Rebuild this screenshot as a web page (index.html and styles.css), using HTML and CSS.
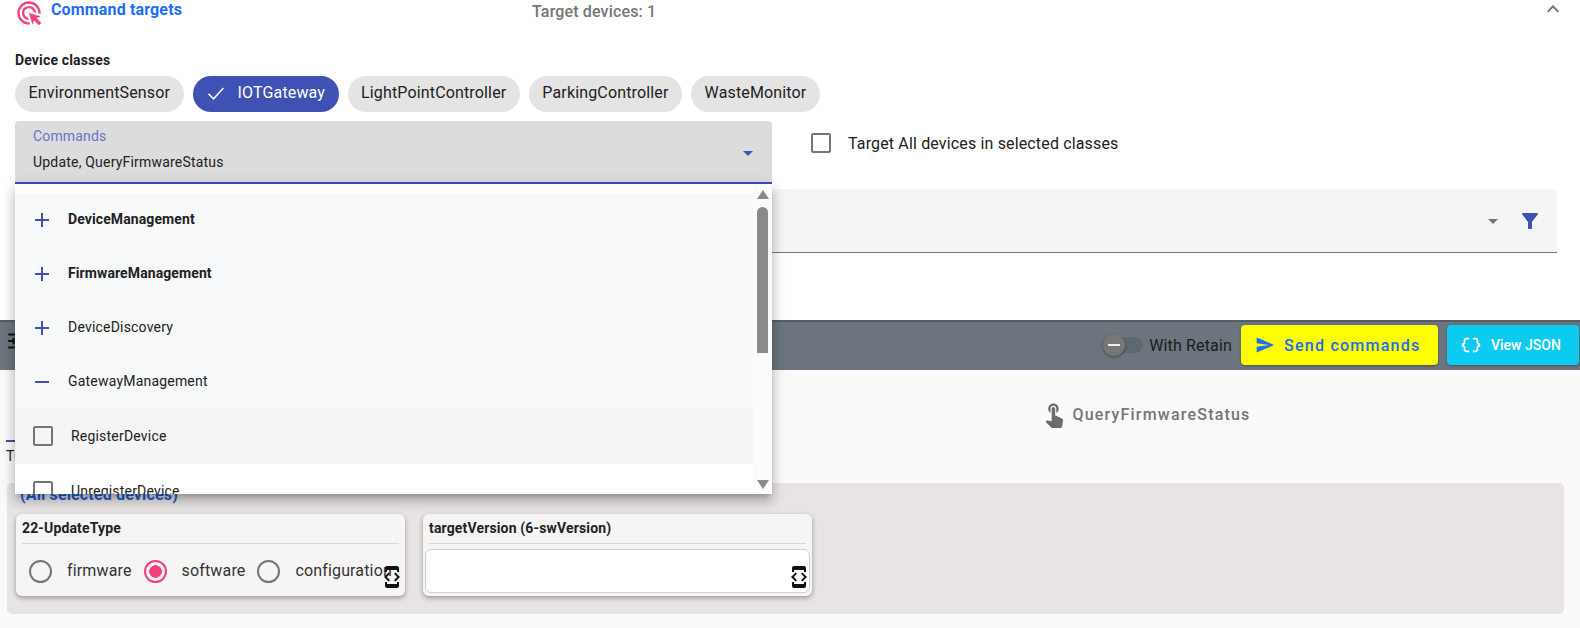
FILE: index.html
```html
<!DOCTYPE html>
<html lang="en">
<head>
  <meta charset="UTF-8" />
  <title>Command targets</title>
  <link rel="stylesheet" href="styles.css">
</head>
<body>
  <!-- Targets -->
  <section class="targets">
    <div class="targets-head">
      <svg class="icon-click" viewBox="0 0 24 24"><path d="M11.71 17.99C8.53 17.84 6 15.22 6 12c0-3.31 2.69-6 6-6 3.22 0 5.84 2.53 5.99 5.71l-2.1-.63C15.48 9.31 13.89 8 12 8c-2.21 0-4 1.79-4 4 0 1.89 1.31 3.48 3.08 3.89l.63 2.1zM22 12c0 .3-.01.6-.04.9l-1.97-.59c.01-.1.01-.21.01-.31 0-4.42-3.58-8-8-8s-8 3.58-8 8 3.58 8 8 8c.1 0 .21 0 .31-.01l.59 1.97c-.3.03-.6.04-.9.04-5.52 0-10-4.48-10-10S6.48 2 12 2s10 4.48 10 10zm-3.77 4.26L22 15l-10-3 3 10 1.26-3.77 4.27 4.27 1.98-1.98-4.28-4.26z"/></svg>
      <span class="head-title">Command targets</span>
      <span class="head-count">Target devices: 1</span>
      <svg class="icon-less" viewBox="0 0 24 24"><path d="M12 8l-6 6 1.41 1.41L12 10.83l4.59 4.58L18 14z"/></svg>
    </div>

    <div class="classes-label">Device classes</div>
    <div class="chips">
      <span class="chip">EnvironmentSensor</span>
      <span class="chip chip-on">
        <svg class="chip-check" viewBox="0 0 24 24"><path d="M3 13l6 6L21 6" /></svg>
        IOTGateway
      </span>
      <span class="chip">LightPointController</span>
      <span class="chip">ParkingController</span>
      <span class="chip">WasteMonitor</span>
    </div>

    <div class="commands-row">
      <div class="select-wrap">
        <div class="select">
          <div class="select-label">Commands</div>
          <div class="select-value">Update, QueryFirmwareStatus</div>
          <span class="arrow arrow-blue"></span>
        </div>

        <!-- Open menu -->
        <div class="menu">
          <div class="menu-list">
            <div class="menu-group"><span class="plus"></span><b>DeviceManagement</b></div>
            <div class="menu-group"><span class="plus"></span><b>FirmwareManagement</b></div>
            <div class="menu-group"><span class="plus"></span>DeviceDiscovery</div>
            <div class="menu-group"><span class="minus"></span>GatewayManagement</div>
            <div class="menu-item menu-item-hover"><span class="box"></span>RegisterDevice</div>
            <div class="menu-item"><span class="box"></span>UnregisterDevice</div>
          </div>
          <div class="scroll">
            <span class="scroll-up"></span>
            <span class="scroll-thumb"></span>
            <span class="scroll-down"></span>
          </div>
        </div>
      </div>
      <label class="all-check"><span class="box"></span>Target All devices in selected classes</label>
    </div>

    <div class="filter-field">
      <span class="arrow arrow-grey"></span>
      <svg class="icon-filter" viewBox="0 0 24 24"><path d="M4.25 5.61C6.27 8.2 10 13 10 13v6c0 .55.45 1 1 1h2c.55 0 1-.45 1-1v-6s3.72-4.8 5.74-7.39C20.25 4.95 19.78 4 18.95 4H5.04c-.83 0-1.3.95-.79 1.61z"/></svg>
    </div>
  </section>

  <!-- Toolbar -->
  <div class="toolbar">
    <svg class="icon-tune" viewBox="0 0 24 24"><path d="M3 17v2h6v-2H3zM3 5v2h10V5H3zm10 16v-2h8v-2h-8v-2h-2v6h2zM7 9v2H3v2h4v2h2V9H7zm14 4v-2H11v2h10zm-6-4h2V7h4V5h-4V3h-2v6z"/></svg>
    <div class="retain">
      <span class="switch"><span class="switch-thumb"></span></span>
      With Retain
    </div>
    <button class="btn btn-send">
      <svg viewBox="0 0 24 24"><path d="M2.01 21L23 12 2.01 3 2 10l15 2-15 2z"/></svg>
      Send commands
    </button>
    <button class="btn btn-json">
      <svg viewBox="0 0 24 24"><path d="M4 7v2c0 .55-.45 1-1 1H2v4h1c.55 0 1 .45 1 1v2c0 1.65 1.35 3 3 3h3v-2H7c-.55 0-1-.45-1-1v-2c0-1.3-.84-2.42-2-2.83v-.34C5.16 11.42 6 10.3 6 9V7c0-.55.45-1 1-1h3V4H7C5.35 4 4 5.35 4 7zm17 3c-.55 0-1-.45-1-1V7c0-1.65-1.35-3-3-3h-3v2h3c.55 0 1 .45 1 1v2c0 1.3.84 2.42 2 2.83v.34c-1.16.41-2 1.52-2 2.83v2c0 .55-.45 1-1 1h-3v2h3c1.65 0 3-1.35 3-3v-2c0-.55.45-1 1-1h1v-4h-1z"/></svg>
      View JSON
    </button>
  </div>

  <!-- Tabs and parameters -->
  <section class="content">
    <div class="tabs">
      <div class="tab tab-on"></div>
      <div class="tab">
        <svg class="icon-touch" viewBox="0 0 24 24"><path d="M9 11.24V7.5C9 6.12 10.12 5 11.5 5S14 6.12 14 7.5v3.74c1.21-.81 2-2.18 2-3.74C16 5.01 13.99 3 11.5 3S7 5.01 7 7.5c0 1.56.79 2.93 2 3.74zm9.84 4.63l-4.54-2.26c-.17-.07-.35-.11-.54-.11H13v-6c0-.83-.67-1.5-1.5-1.5S10 6.67 10 7.5v10.74l-3.43-.72c-.08-.01-.15-.03-.24-.03-.31 0-.59.13-.79.33l-.79.8 4.94 4.94c.27.27.65.44 1.06.44h6.79c.75 0 1.33-.55 1.44-1.28l.75-5.27c.01-.07.02-.14.02-.2 0-.62-.38-1.16-.91-1.38z"/></svg>
        QueryFirmwareStatus
      </div>
    </div>
    <div class="tab-note">Tr</div>
    <div class="params">
      <div class="params-title">(All selected devices)</div>
      <div class="cards">
        <div class="card">
          <div class="card-title">22-UpdateType</div>
          <div class="radios">
            <span class="radio"></span><span class="radio-label">firmware</span>
            <span class="radio radio-on"></span><span class="radio-label">software</span>
            <span class="radio"></span><span class="radio-label">configuration</span>
          </div>
          <svg class="icon-dev" viewBox="0 0 24 24"><path d="M7 5h10v2h2V3c0-1.1-.9-1.99-2-1.99L7 1c-1.1 0-2 .9-2 2v4h2V5zm8.41 11.59L20 12l-4.59-4.59L14 8.83 17.17 12 14 15.17l1.41 1.42zM10 15.17L6.83 12 10 8.83 8.59 7.41 4 12l4.59 4.59L10 15.17zM17 19H7v-2H5v4c0 1.1.9 2 2 2h10c1.1 0 2-.9 2-2v-4h-2v2z"/></svg>
        </div>
        <div class="card">
          <div class="card-title">targetVersion (6-swVersion)</div>
          <div class="card-input"></div>
          <svg class="icon-dev" viewBox="0 0 24 24"><path d="M7 5h10v2h2V3c0-1.1-.9-1.99-2-1.99L7 1c-1.1 0-2 .9-2 2v4h2V5zm8.41 11.59L20 12l-4.59-4.59L14 8.83 17.17 12 14 15.17l1.41 1.42zM10 15.17L6.83 12 10 8.83 8.59 7.41 4 12l4.59 4.59L10 15.17zM17 19H7v-2H5v4c0 1.1.9 2 2 2h10c1.1 0 2-.9 2-2v-4h-2v2z"/></svg>
        </div>
      </div>
    </div>
  </section>
</body>
</html>
```

FILE: styles.css
```css
* {
  box-sizing: border-box;
  margin: 0;
  padding: 0;
}
html, body {
  height: 100%;
  overflow: hidden;
}
body {
  font-family: Roboto, "Liberation Sans", sans-serif;
  font-size: 16px;
  letter-spacing: .15px;
  color: #212121;
  background: #fafafa;
}
svg {
  display: block;
  flex: none;
}

/* Targets */
.targets {
  height: 320px;
  padding: 0 0 0 15px;
  background: #fff;
  position: relative;
  z-index: 2;
}
.targets-head {
  display: flex;
  align-items: center;
  height: 24px;
  margin-bottom: 27px;
}
.icon-click {
  width: 28px;
  height: 28px;
  fill: #f73d7c;
  margin-top: 1px;
}
.head-title {
  margin-left: 8px;
  width: 481px;
  font-weight: 700;
  color: #1a6ef5;
  margin-top: -5px;
}
.head-count {
  font-weight: 500;
  color: #757575;
  width: 1014px;
  margin-top: -2px;
}
.icon-less {
  width: 24px;
  height: 24px;
  fill: #757575;
  margin-left: -5px;
  margin-top: -6px;
}
.classes-label {
  font-size: 14px;
  font-weight: 700;
  line-height: 18px;
  margin-bottom: 7px;
}
.chips {
  display: flex;
  gap: 9px;
  margin-bottom: 9px;
}
.chip {
  display: flex;
  align-items: center;
  height: 36px;
  padding: 0 13.5px 2px;
  background: #e4e4e4;
  border-radius: 18px;
  line-height: 1;
}
.chip-on {
  background: #3f51b5;
  color: #fff;
  padding-left: 13px;
}
.chip-check {
  width: 20px;
  height: 20px;
  margin-right: 12px;
  fill: none;
  stroke: #fff;
  stroke-width: 1.8;
}

.commands-row {
  display: flex;
  align-items: flex-start;
}
.select-wrap {
  position: relative;
  width: 757px;
}
.select {
  position: relative;
  height: 63px;
  padding: 7px 18px 0;
  background: #dcdcdc;
  border-bottom: 2px solid #3f51b5;
  border-radius: 4px 4px 0 0;
}
.select-label {
  font-size: 14px;
  line-height: 16px;
  color: #6a72c6;
}
.select-value {
  font-size: 14px;
  line-height: 16px;
  margin-top: 10px;
  letter-spacing: .2px;
}
.arrow {
  position: absolute;
  width: 0;
  height: 0;
  border-left: 5px solid transparent;
  border-right: 5px solid transparent;
}
.arrow-blue {
  border-top: 5px solid #3f51b5;
  right: 19px;
  top: 30px;
}
.arrow-grey {
  border-top: 5px solid #757575;
  right: 59px;
  top: 30px;
}

/* Open menu */
.menu {
  position: absolute;
  left: 0;
  top: 63px;
  width: 757px;
  height: 310px;
  display: flex;
  background: #fff;
  box-shadow: 0 5px 5px -3px rgba(0,0,0,.2), 0 8px 10px 1px rgba(0,0,0,.14), 0 3px 14px 2px rgba(0,0,0,.12);
  z-index: 5;
  overflow: hidden;
  font-size: 14px;
}
.menu-list {
  flex: 1;
  padding-top: 9px;
  overflow: hidden;
}
.menu-group, .menu-item {
  display: flex;
  align-items: center;
  height: 54px;
  padding: 0 0 2px 20px;
  background: #f8f9fb;
  letter-spacing: .2px;
}
.menu-group b {
  font-weight: 700;
  letter-spacing: .1px;
}
.plus, .minus {
  position: relative;
  width: 14px;
  height: 14px;
  margin-right: 19px;
  margin-top: 2px;
}
.plus::before, .minus::before {
  content: "";
  position: absolute;
  left: 0;
  right: 0;
  top: 6px;
  height: 2px;
  background: #3f51b5;
}
.plus::after {
  content: "";
  position: absolute;
  top: 0;
  bottom: 0;
  left: 6px;
  width: 2px;
  background: #3f51b5;
}
.menu-item {
  height: 55px;
  padding-left: 18px;
  background: #fff;
}
.menu-item-hover {
  background: #f5f5f5;
}
.box {
  flex: none;
  width: 20px;
  height: 20px;
  border: 2px solid #757575;
  border-radius: 2px;
}
.menu-item .box {
  margin-right: 18px;
}
.scroll {
  flex: none;
  width: 19px;
  background: #fbfbfb;
  position: relative;
}
.scroll-up, .scroll-down {
  position: absolute;
  left: 4px;
  width: 0;
  height: 0;
  border-left: 6px solid transparent;
  border-right: 6px solid transparent;
}
.scroll-up {
  top: 6px;
  border-bottom: 9px solid #8a8a8a;
}
.scroll-down {
  bottom: 5px;
  border-top: 9px solid #8a8a8a;
}
.scroll-thumb {
  position: absolute;
  left: 4px;
  top: 23px;
  width: 11px;
  height: 146px;
  background: #8a8a8a;
  border-radius: 6px 6px 0 0;
}

.all-check {
  display: flex;
  align-items: center;
  gap: 17px;
  margin: 12px 0 0 39px;
}
.filter-field {
  position: relative;
  width: 1542px;
  height: 64px;
  margin-top: 5px;
  background: #f5f5f5;
  border-bottom: 1px solid #757575;
  border-radius: 4px 4px 0 0;
}
.icon-filter {
  position: absolute;
  right: 15px;
  top: 20px;
  width: 24px;
  height: 24px;
  fill: #3f51b5;
}

/* Toolbar */
.toolbar {
  display: flex;
  align-items: center;
  height: 50px;
  padding: 0 1px 2px 0;
  background: #6c757d;
  border-top: 2px solid #565d64;
}
.icon-tune {
  width: 26px;
  height: 26px;
  fill: #111;
  margin: 0 auto 8px 5px;
}
.retain {
  display: flex;
  align-items: center;
  color: #1b1b1b;
  margin-right: 9px;
}
.switch {
  position: relative;
  width: 38px;
  height: 16px;
  margin-right: 6px;
  background: #5f6770;
  border-radius: 8px;
}
.switch-thumb {
  position: absolute;
  left: -2px;
  top: -3px;
  width: 22px;
  height: 22px;
  border-radius: 50%;
  background: #777;
  box-shadow: 0 1px 3px rgba(0,0,0,.4);
}
.switch-thumb::after {
  content: "";
  position: absolute;
  left: 5px;
  right: 5px;
  top: 10px;
  height: 2px;
  background: #eee;
}
.btn {
  display: flex;
  align-items: center;
  height: 40px;
  border: 0;
  border-radius: 4px;
  font-family: inherit;
  font-weight: 500;
  box-shadow: 0 1px 3px rgba(0,0,0,.3);
}
.btn-send {
  width: 197px;
  padding-left: 14px;
  margin-right: 9px;
  background: #ff0;
  color: #1a6ef5;
  font-size: 16px;
  letter-spacing: 1.25px;
}
.btn-send svg {
  width: 20px;
  height: 20px;
  fill: #1a6ef5;
  margin-right: 9px;
}
.btn-json {
  width: 132px;
  padding-left: 13px;
  background: #0dcaf0;
  color: #fff;
  font-size: 14px;
}
.btn-json svg {
  width: 22px;
  height: 22px;
  fill: #fff;
  margin-right: 9px;
}

/* Tabs and parameters */
.content {
  padding: 0 16px 0 6px;
}
.tabs {
  display: flex;
  height: 72px;
}
.tab {
  display: flex;
  align-items: center;
  justify-content: center;
  width: 761px;
  height: 72px;
  padding: 16px 4px 0 0;
  color: #757575;
  font-weight: 500;
  font-size: 16px;
  letter-spacing: 1.2px;
}
.tab-on {
  border-bottom: 2px solid #3f51b5;
}
.icon-touch {
  width: 28px;
  height: 28px;
  fill: #6b6b6b;
  margin-right: 4px;
}
.tab-note {
  font-size: 14px;
  line-height: 16px;
  margin-top: 6px;
  height: 35px;
}
.params {
  height: 131px;
  margin-left: 1px;
  padding: 2px 9px 0;
  background: #e8e4e3;
  border-radius: 5px;
}
.params-title {
  font-weight: 700;
  color: #1a5fd6;
  line-height: 20px;
  margin-left: 4px;
}
.cards {
  display: flex;
  gap: 18px;
  margin-top: 9px;
}
.card {
  position: relative;
  width: 389px;
  height: 82px;
  padding: 5px 2px 0;
  background: #f5f5f5;
  border-radius: 6px;
  box-shadow: 0 2px 5px rgba(0,0,0,.35);
}
.card-title {
  margin: 0 4px;
  height: 25px;
  padding-bottom: 5px;
  font-size: 14px;
  font-weight: 700;
  line-height: 18px;
  border-bottom: 1px solid #d8d8d8;
}
.radios {
  display: flex;
  align-items: center;
  padding: 16px 0 0 11px;
  white-space: nowrap;
}
.radio {
  flex: none;
  width: 23px;
  height: 23px;
  border: 2px solid #757575;
  border-radius: 50%;
  margin-right: 15px;
}
.radio-on {
  border-color: #f73d7c;
  background: radial-gradient(circle, #f73d7c 0 6px, transparent 6.5px);
}
.radio-label {
  margin: 0 12px 2px 0;
  color: #333;
}
.card-input {
  height: 44px;
  margin-top: 5px;
  background: #fff;
  border: 1px solid #d0d0d0;
  border-radius: 6px;
}
.icon-dev {
  position: absolute;
  right: 1px;
  bottom: 7px;
  width: 24px;
  height: 24px;
  fill: #111;
}
```
